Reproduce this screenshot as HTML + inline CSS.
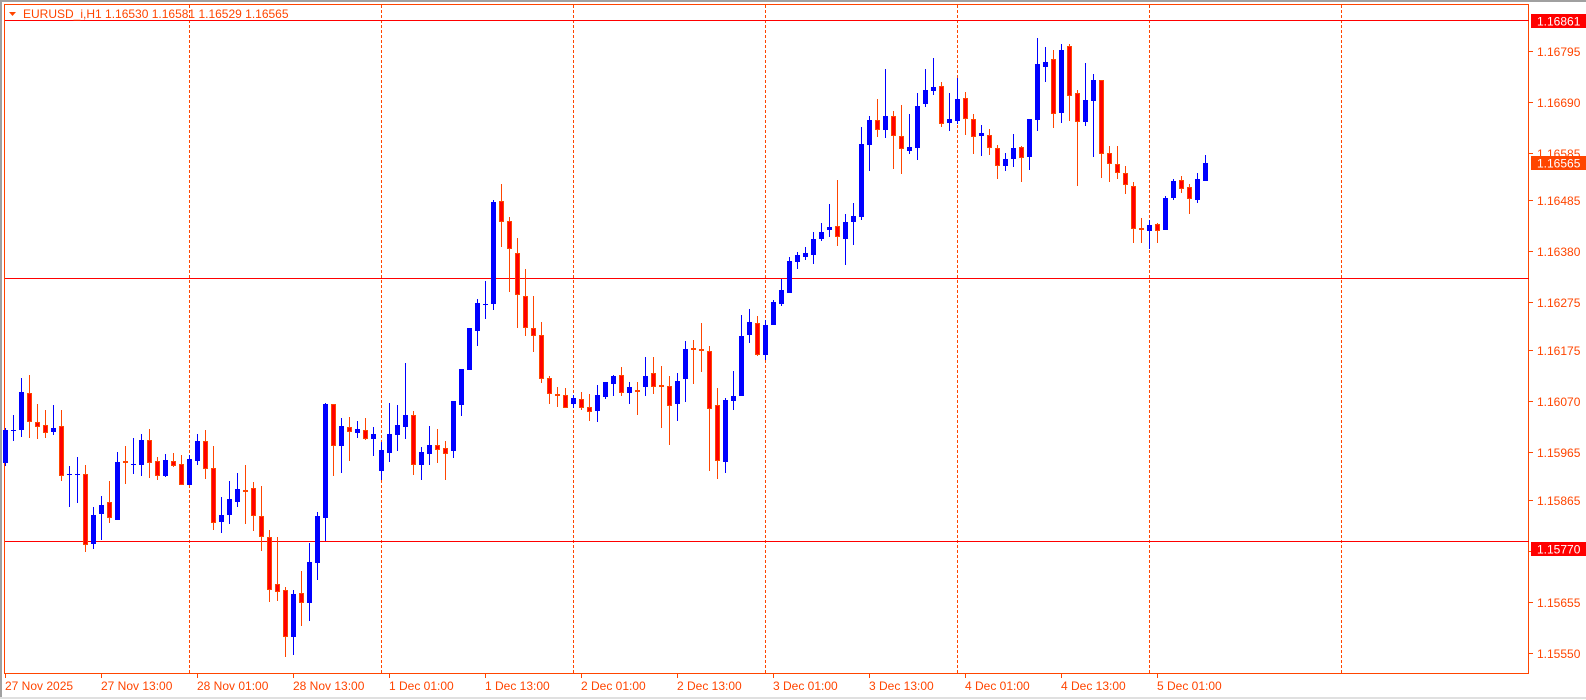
<!DOCTYPE html>
<html><head><meta charset="utf-8"><style>
html,body{margin:0;padding:0;background:#fff;}
svg{display:block;font-family:"Liberation Sans",sans-serif;}
</style></head><body>
<svg width="1586" height="700" viewBox="0 0 1586 700" xmlns="http://www.w3.org/2000/svg" shape-rendering="crispEdges">
<rect width="1586" height="700" fill="#fff"/>
<rect x="0" y="0" width="1586" height="2" fill="#a0a0a0"/>
<rect x="0" y="0" width="2" height="698" fill="#a0a0a0"/>
<rect x="0" y="697" width="1586" height="2" fill="#e0e0e0"/>
<!-- frame -->
<rect x="4.5" y="4.5" width="1524" height="669" fill="none" stroke="#ff4500" stroke-width="1"/>
<!-- vertical dashed grid -->
<g stroke="#ff4500" stroke-width="1" stroke-dasharray="3,2">
<path d="M189.5 5V673M381.5 5V673M573.5 5V673M765.5 5V673M957.5 5V673M1149.5 5V673M1341.5 5V673"/>
</g>
<!-- horizontal levels -->
<g stroke="#ff0000" stroke-width="1">
<path d="M5 20.5H1529M5 278.5H1529M5 541.5H1529"/>
</g>
<!-- bull wicks -->
<path stroke="#0000ff" stroke-width="1" fill="none" d="M5.5 428V466M13.5 415V441M21.5 378V437M53.5 405V435M69.5 466V507M77.5 457V503M93.5 507V549M101.5 496V540M117.5 452V520M133.5 438V474M141.5 434V476M165.5 454V477M189.5 455V485M197.5 434V465M221.5 497V533M229.5 481V524M237.5 473V507M293.5 590V655M309.5 543V621M317.5 512V580M325.5 403V541M341.5 418V473M357.5 421V438M373.5 427V456M381.5 442V480M389.5 403V462M397.5 405V451M405.5 363V439M421.5 447V480M429.5 426V465M453.5 401V458M461.5 369V416M469.5 328V370M477.5 299V346M485.5 281V319M493.5 200V310M573.5 395V408M597.5 385V422M605.5 382V399M613.5 375V396M629.5 382V404M645.5 357V396M677.5 373V421M685.5 341V402M725.5 398V473M733.5 371V410M741.5 315V396M749.5 309V343M765.5 320V360M773.5 300V325M781.5 279V306M789.5 257V293M797.5 252V269M805.5 247V260M813.5 232V264M821.5 223V241M829.5 204V237M845.5 214V265M853.5 203V245M861.5 127V220M869.5 116V171M885.5 69V138M909.5 114V154M917.5 93V160M925.5 69V107M933.5 58V95M949.5 93V131M957.5 78V124M981.5 125V156M1005.5 153V171M1013.5 134V167M1029.5 119V170M1037.5 38V131M1045.5 47V82M1061.5 44V123M1085.5 63V126M1093.5 74V157M1149.5 220V249M1165.5 196V230M1173.5 179V200M1197.5 173V203M1205.5 155V181"/>
<!-- bull bodies -->
<path fill="#0000ff" d="M3 430h5v33h-5zM11 430h5v1h-5zM19 392h5v38h-5zM51 428h5v4h-5zM67 474h5v1h-5zM75 474h5v1h-5zM91 515h5v29h-5zM99 505h5v9h-5zM115 462h5v58h-5zM131 464h5v1h-5zM139 440h5v25h-5zM163 460h5v16h-5zM187 459h5v26h-5zM195 441h5v20h-5zM219 515h5v7h-5zM227 499h5v16h-5zM235 489h5v13h-5zM291 594h5v43h-5zM307 562h5v41h-5zM315 516h5v47h-5zM323 404h5v114h-5zM339 426h5v20h-5zM355 429h5v4h-5zM371 434h5v5h-5zM379 450h5v21h-5zM387 434h5v19h-5zM395 425h5v10h-5zM403 415h5v12h-5zM419 452h5v13h-5zM427 445h5v9h-5zM451 401h5v50h-5zM459 369h5v36h-5zM467 328h5v42h-5zM475 303h5v28h-5zM483 304h5v1h-5zM491 202h5v102h-5zM571 398h5v6h-5zM595 395h5v16h-5zM603 382h5v15h-5zM611 376h5v8h-5zM627 387h5v6h-5zM643 376h5v11h-5zM675 381h5v23h-5zM683 349h5v30h-5zM723 400h5v62h-5zM731 396h5v5h-5zM739 336h5v60h-5zM747 322h5v13h-5zM763 325h5v30h-5zM771 302h5v23h-5zM779 290h5v14h-5zM787 261h5v32h-5zM795 255h5v7h-5zM803 253h5v4h-5zM811 239h5v16h-5zM819 232h5v7h-5zM827 227h5v3h-5zM843 222h5v17h-5zM851 216h5v6h-5zM859 144h5v73h-5zM867 120h5v25h-5zM883 116h5v14h-5zM907 147h5v4h-5zM915 106h5v42h-5zM923 90h5v14h-5zM931 87h5v4h-5zM947 119h5v4h-5zM955 99h5v22h-5zM979 133h5v3h-5zM1003 159h5v7h-5zM1011 148h5v11h-5zM1027 119h5v38h-5zM1035 64h5v56h-5zM1043 62h5v5h-5zM1059 50h5v63h-5zM1083 100h5v22h-5zM1091 80h5v21h-5zM1147 225h5v6h-5zM1163 198h5v32h-5zM1171 181h5v17h-5zM1195 179h5v21h-5zM1203 163h5v18h-5z"/>
<!-- bear wicks -->
<path stroke="#ff4500" stroke-width="1" fill="none" d="M29.5 375V438M37.5 404V439M45.5 410V438M61.5 410V481M85.5 465V552M109.5 481V523M125.5 446V484M149.5 429V478M157.5 457V480M173.5 453V467M181.5 455V485M205.5 430V479M213.5 446V530M245.5 465V524M253.5 482V531M261.5 486V551M269.5 530V602M277.5 537V601M285.5 587V657M301.5 571V626M333.5 404V476M349.5 417V461M365.5 418V440M413.5 411V475M437.5 429V463M445.5 441V480M501.5 184V247M509.5 217V292M517.5 238V328M525.5 269V336M533.5 296V352M541.5 322V383M549.5 376V404M557.5 387V407M565.5 388V408M581.5 392V410M589.5 394V421M621.5 367V396M637.5 382V415M653.5 357V394M661.5 366V428M669.5 376V445M693.5 340V384M701.5 323V372M709.5 346V471M717.5 388V479M757.5 316V356M837.5 180V246M877.5 99V137M893.5 111V169M901.5 105V174M941.5 82V127M965.5 92V135M973.5 114V154M989.5 129V155M997.5 145V179M1021.5 146V182M1053.5 50V128M1069.5 44V121M1077.5 90V186M1101.5 80V178M1109.5 146V182M1117.5 146V179M1125.5 166V194M1133.5 182V243M1141.5 218V243M1157.5 223V243M1181.5 176V193M1189.5 184V214"/>
<!-- bear bodies -->
<path fill="#ff0000" stroke="#ff4500" stroke-width="1" d="M27.5 393.5h4v28h-4zM35.5 422.5h4v4h-4zM43.5 425.5h4v7h-4zM59.5 426.5h4v49h-4zM83.5 474.5h4v70h-4zM107.5 502.5h4v15h-4zM123.5 461.5h4v1h-4zM147.5 440.5h4v22h-4zM155.5 461.5h4v14h-4zM171.5 461.5h4v4h-4zM179.5 464.5h4v20h-4zM203.5 441.5h4v27h-4zM211.5 468.5h4v54h-4zM243.5 490.5h4v1h-4zM251.5 488.5h4v27h-4zM259.5 516.5h4v20h-4zM267.5 537.5h4v52h-4zM275.5 584.5h4v7h-4zM283.5 590.5h4v46h-4zM299.5 593.5h4v9h-4zM331.5 404.5h4v41h-4zM347.5 427.5h4v4h-4zM363.5 430.5h4v8h-4zM411.5 415.5h4v49h-4zM435.5 445.5h4v4h-4zM443.5 448.5h4v5h-4zM499.5 201.5h4v20h-4zM507.5 221.5h4v27h-4zM515.5 253.5h4v41h-4zM523.5 296.5h4v31h-4zM531.5 328.5h4v7h-4zM539.5 335.5h4v43h-4zM547.5 378.5h4v15h-4zM555.5 394.5h4v1h-4zM563.5 395.5h4v12h-4zM579.5 399.5h4v8h-4zM587.5 407.5h4v4h-4zM619.5 375.5h4v17h-4zM635.5 390.5h4v1h-4zM651.5 373.5h4v13h-4zM659.5 385.5h4v1h-4zM667.5 386.5h4v19h-4zM691.5 348.5h4v1h-4zM699.5 349.5h4v1h-4zM707.5 351.5h4v57h-4zM715.5 405.5h4v55h-4zM755.5 323.5h4v31h-4zM835.5 226.5h4v10h-4zM875.5 120.5h4v9h-4zM891.5 116.5h4v19h-4zM899.5 136.5h4v12h-4zM939.5 86.5h4v37h-4zM963.5 98.5h4v20h-4zM971.5 119.5h4v17h-4zM987.5 135.5h4v12h-4zM995.5 148.5h4v17h-4zM1019.5 147.5h4v10h-4zM1051.5 59.5h4v54h-4zM1067.5 46.5h4v49h-4zM1075.5 93.5h4v28h-4zM1099.5 80.5h4v73h-4zM1107.5 153.5h4v10h-4zM1115.5 164.5h4v8h-4zM1123.5 173.5h4v11h-4zM1131.5 186.5h4v42h-4zM1139.5 228.5h4v1h-4zM1155.5 224.5h4v6h-4zM1179.5 180.5h4v8h-4zM1187.5 187.5h4v11h-4z"/>
<!-- title -->
<path d="M9 12h7l-3.5 4z" fill="#ff4500" shape-rendering="auto"/>
<text x="23" y="18" font-size="12" fill="#ff4500">EURUSD_i,H1  1.16530 1.16581 1.16529 1.16565</text>
<!-- price axis ticks -->
<path stroke="#ff4500" stroke-width="1" d="M1529 51.5h4M1529 102.5h4M1529 153.5h4M1529 200.5h4M1529 251.5h4M1529 302.5h4M1529 350.5h4M1529 401.5h4M1529 452.5h4M1529 500.5h4M1529 551.5h4M1529 602.5h4M1529 653.5h4"/>
<g font-size="12" fill="#ff4500">
<text x="1537" y="56">1.16795</text>
<text x="1537" y="107">1.16690</text>
<text x="1537" y="158">1.16585</text>
<text x="1537" y="205">1.16485</text>
<text x="1537" y="256">1.16380</text>
<text x="1537" y="307">1.16275</text>
<text x="1537" y="355">1.16175</text>
<text x="1537" y="406">1.16070</text>
<text x="1537" y="457">1.15965</text>
<text x="1537" y="505">1.15865</text>
<text x="1537" y="556">1.15760</text>
<text x="1537" y="607">1.15655</text>
<text x="1537" y="658">1.15550</text>
</g>
<!-- highlighted price boxes -->
<rect x="1531" y="14" width="55" height="14" fill="#ff0000"/>
<text x="1537" y="25.5" font-size="12" fill="#fff">1.16861</text>
<rect x="1531" y="156" width="55" height="14" fill="#ff4500"/>
<text x="1537" y="167.5" font-size="12" fill="#fff">1.16565</text>
<rect x="1531" y="542" width="55" height="14" fill="#ff0000"/>
<text x="1537" y="553.5" font-size="12" fill="#fff">1.15770</text>
<!-- time axis -->
<path stroke="#ff4500" stroke-width="1" d="M5.5 674v4M101.5 674v4M197.5 674v4M293.5 674v4M389.5 674v4M485.5 674v4M581.5 674v4M677.5 674v4M773.5 674v4M869.5 674v4M965.5 674v4M1061.5 674v4M1157.5 674v4"/>
<g font-size="12" fill="#ff4500">
<text x="5" y="690">27 Nov 2025</text>
<text x="101" y="690">27 Nov 13:00</text>
<text x="197" y="690">28 Nov 01:00</text>
<text x="293" y="690">28 Nov 13:00</text>
<text x="389" y="690">1 Dec 01:00</text>
<text x="485" y="690">1 Dec 13:00</text>
<text x="581" y="690">2 Dec 01:00</text>
<text x="677" y="690">2 Dec 13:00</text>
<text x="773" y="690">3 Dec 01:00</text>
<text x="869" y="690">3 Dec 13:00</text>
<text x="965" y="690">4 Dec 01:00</text>
<text x="1061" y="690">4 Dec 13:00</text>
<text x="1157" y="690">5 Dec 01:00</text>
</g>
</svg>
</body></html>
